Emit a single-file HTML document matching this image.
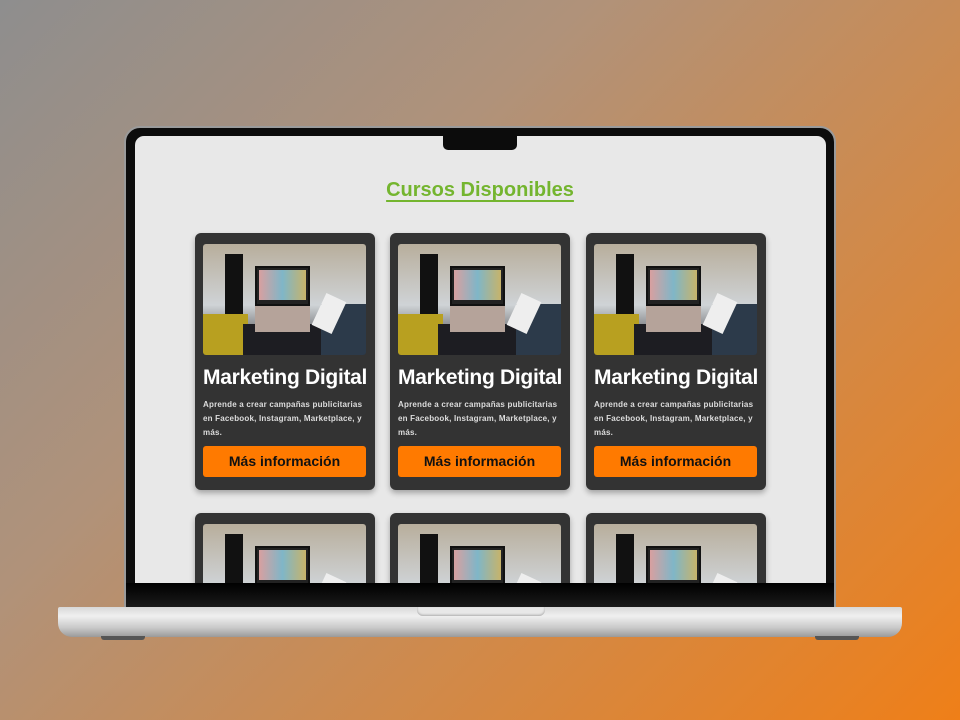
<!DOCTYPE html>
<html><head><meta charset="utf-8"><style>
*{margin:0;padding:0;box-sizing:border-box}
html,body{width:960px;height:720px;overflow:hidden}
body{background:linear-gradient(135deg,#8e8e8e 0%,#b0927a 35%,#cf8a4c 65%,#ef7f18 100%);font-family:"Liberation Sans",sans-serif;position:relative}
.body{position:absolute;left:124px;top:126px;width:712px;height:484px;background:#0c0c0c;border-radius:16px 16px 0 0;border:2px solid #9a9a9a}
.screen{position:absolute;left:135px;top:136px;width:691px;height:447px;background:#e8e8e8;border-radius:9px 9px 0 0;overflow:hidden}
.notch{position:absolute;left:443px;top:136px;width:74px;height:14px;background:#0c0c0c;border-radius:0 0 5px 5px}
.chin{position:absolute;left:126px;top:583px;width:708px;height:24px;background:linear-gradient(#000,#1a1a1a)}
.base{position:absolute;left:58px;top:607px;width:844px;height:30px;background:linear-gradient(#d8d8d8,#f0f0f0 30%,#c8c8c8 70%,#9a9a9a);border-radius:2px 2px 14px 14px}
.lip{position:absolute;left:417px;top:607px;width:128px;height:9px;background:#e8e8e8;border-radius:0 0 6px 6px;box-shadow:inset 0 -1px 2px #aaa}
.foot{position:absolute;top:636px;width:44px;height:4px;background:#555;border-radius:0 0 3px 3px}
h2{position:absolute;left:0;width:100%;top:179px;text-align:center;color:#74b52f;font-size:20px;font-weight:bold;text-decoration:underline;text-underline-offset:4px}
.card{position:absolute;width:180px;height:257px;background:#333;border-radius:6px;box-shadow:0 3px 6px rgba(0,0,0,.3)}
.img{position:absolute;left:8px;top:11px;width:163px;height:111px;border-radius:3px;overflow:hidden;background:linear-gradient(#b8ae9c,#cfd3d6 55%,#2b2b2f)}
.img .lap{position:absolute;left:52px;top:22px;width:55px;height:40px;background:#222;border:2px solid #111}
.img .scr{position:absolute;left:56px;top:26px;width:47px;height:30px;background:linear-gradient(90deg,#d8a0a0,#7fb6c8,#c7b36a)}
.img .kb{position:absolute;left:52px;top:62px;width:55px;height:26px;background:#b5a39a}
.img .l{position:absolute;left:0;top:70px;width:45px;height:41px;background:#b8a020}
.img .d{position:absolute;left:40px;top:80px;width:80px;height:31px;background:#1d1d22}
.img .r{position:absolute;right:0;top:60px;width:45px;height:51px;background:#2c3a4a}
.img .leg{position:absolute;left:22px;top:10px;width:18px;height:60px;background:#111}
.img .nb{position:absolute;left:115px;top:52px;width:22px;height:35px;background:#eee;transform:rotate(25deg)}
.card h3{position:absolute;left:8px;top:133px;color:#fff;font-size:21px;font-weight:bold;white-space:nowrap;letter-spacing:-.3px}
.card p{position:absolute;left:8px;top:165px;width:162px;color:#ddd;font-size:8px;line-height:14px;font-weight:bold;letter-spacing:.2px}
.btn{position:absolute;left:8px;top:213px;width:163px;height:31px;background:#ff7a00;border-radius:3px;text-align:center;line-height:31px;color:#111;font-size:14px;font-weight:bold}
</style></head><body>
<div class="body"></div>
<div class="screen"></div>
<h2>Cursos Disponibles</h2>
<div class="chin"></div>
<div class="base"></div>
<div class="lip"></div>
<div class="foot" style="left:101px"></div>
<div class="foot" style="left:815px"></div>
<div style="position:absolute;left:135px;top:136px;width:691px;height:447px;overflow:hidden">
<div class="card" style="left:60px;top:97px"><div class="img"><div class="leg"></div><div class="l"></div><div class="d"></div><div class="r"></div><div class="kb"></div><div class="lap"></div><div class="scr"></div><div class="nb"></div></div><h3>Marketing Digital</h3><p>Aprende a crear campañas publicitarias en Facebook, Instagram, Marketplace, y más.</p><div class="btn">Más información</div></div>
<div class="card" style="left:255px;top:97px"><div class="img"><div class="leg"></div><div class="l"></div><div class="d"></div><div class="r"></div><div class="kb"></div><div class="lap"></div><div class="scr"></div><div class="nb"></div></div><h3>Marketing Digital</h3><p>Aprende a crear campañas publicitarias en Facebook, Instagram, Marketplace, y más.</p><div class="btn">Más información</div></div>
<div class="card" style="left:451px;top:97px"><div class="img"><div class="leg"></div><div class="l"></div><div class="d"></div><div class="r"></div><div class="kb"></div><div class="lap"></div><div class="scr"></div><div class="nb"></div></div><h3>Marketing Digital</h3><p>Aprende a crear campañas publicitarias en Facebook, Instagram, Marketplace, y más.</p><div class="btn">Más información</div></div>
<div class="card" style="left:60px;top:377px"><div class="img"><div class="leg"></div><div class="l"></div><div class="d"></div><div class="r"></div><div class="kb"></div><div class="lap"></div><div class="scr"></div><div class="nb"></div></div></div>
<div class="card" style="left:255px;top:377px"><div class="img"><div class="leg"></div><div class="l"></div><div class="d"></div><div class="r"></div><div class="kb"></div><div class="lap"></div><div class="scr"></div><div class="nb"></div></div></div>
<div class="card" style="left:451px;top:377px"><div class="img"><div class="leg"></div><div class="l"></div><div class="d"></div><div class="r"></div><div class="kb"></div><div class="lap"></div><div class="scr"></div><div class="nb"></div></div></div>
</div>
<div class="notch"></div>
</body></html>
